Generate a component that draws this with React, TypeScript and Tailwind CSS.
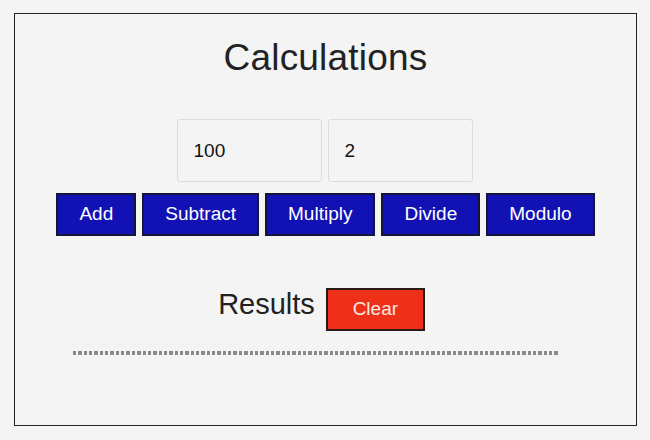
import { useState } from 'react'

const ops = ['Add', 'Subtract', 'Multiply', 'Divide', 'Modulo']

export default function App() {
  const [a, setA] = useState('100')
  const [b, setB] = useState('2')

  return (
    <div className="w-[650px] h-[440px] bg-[#f4f4f4] pt-[13px] pl-[14px] font-['Liberation_Sans',Arial,sans-serif] text-[#222]">
      <div className="w-[623px] h-[413px] border border-[#222] flex flex-col items-center">
        <h1 className="mt-[22px] text-[37px] leading-[43px] tracking-[0.2px]">Calculations</h1>

        <div className="mt-[40px] flex gap-[6px] pr-[2px]">
          <input
            value={a}
            onChange={(e) => setA(e.target.value)}
            className="w-[145px] h-[63px] rounded-[3px] border border-[#dcdcdc] bg-[#f4f4f4] pl-[16px] text-[19px] text-[#111] outline-none"
          />
          <input
            value={b}
            onChange={(e) => setB(e.target.value)}
            className="w-[145px] h-[63px] rounded-[3px] border border-[#dcdcdc] bg-[#f4f4f4] pl-[16px] text-[19px] text-[#111] outline-none"
          />
        </div>

        <div className="mt-[11px] flex gap-[6px]">
          {ops.map((op) => (
            <button
              key={op}
              className="h-[43px] px-[21px] border-2 border-[#15153a] bg-[#1212b4] text-white text-[19px]"
            >
              {op}
            </button>
          ))}
        </div>

        <div className="mt-[50px] flex items-start gap-[11px] pr-[8px]">
          <h2 className="mt-[2px] text-[29px] leading-[32px]">Results</h2>
          <button className="mt-[2px] w-[99px] h-[43px] border-2 border-[#2a1a18] bg-[#ee3019] text-[#fde8e4] text-[19px]">
            Clear
          </button>
        </div>

        <div className="mt-[20px] w-[485px] h-[4px] ml-[-20px] bg-[repeating-linear-gradient(90deg,#8a8a8a_0_3.3px,transparent_3.3px_5.35px)]" />
      </div>
    </div>
  )
}
